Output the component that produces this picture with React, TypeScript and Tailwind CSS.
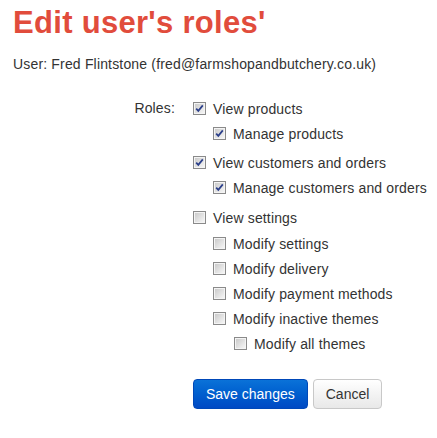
import React from "react";

function Box({ checked }: { checked: boolean }) {
  return (
    <svg width="13" height="13" viewBox="0 0 13 13" className="shrink-0">
      <defs>
        <linearGradient id={checked ? "gc" : "gu"} x1="0" y1="0" x2="1" y2="1">
          <stop offset="0" stopColor="#cbcbcb" />
          <stop offset="1" stopColor="#f5f5f5" />
        </linearGradient>
      </defs>
      <rect x="0.5" y="0.5" width="12" height="12" fill="#f4f4f4" stroke="#8a8a8a" />
      <rect x="2" y="2" width="9" height="9" fill={`url(#${checked ? "gc" : "gu"})`} />
      {checked && (
        <path d="M3.2 6.6 L5.3 8.9 L9.8 3.4" fill="none" stroke="#2b3f8a" strokeWidth="1.7" />
      )}
    </svg>
  );
}

function Row({ label, checked, indent = 0 }: { label: string; checked: boolean; indent?: number }) {
  const pad = indent === 0 ? "pl-[1px]" : indent === 1 ? "pl-[21px]" : "pl-[42px]";
  return (
    <div className={`flex items-center h-[25px] whitespace-nowrap ${pad}`}>
      <Box checked={checked} />
      <span className="ml-[7px] text-[14px] leading-[20px] tracking-[0.15px] text-[#333] whitespace-nowrap">{label}</span>
    </div>
  );
}

export default function App() {
  return (
    <div className="px-[13px] pt-[6px] font-['Liberation_Sans',Arial,sans-serif] text-[#333]">
      <h1 className="text-[31px] leading-[33px] tracking-[0.3px] font-bold text-[#e14c3c] whitespace-nowrap">Edit user's roles'</h1>
      <p className="mt-[15px] text-[14px] leading-[20px] tracking-[0.17px] whitespace-nowrap">
        User: Fred Flintstone (fred@farmshopandbutchery.co.uk)
      </p>
      <div className="mt-[22px] flex">
        <div className="w-[179px] shrink-0 pr-[17px] text-right text-[14px] leading-[25px] tracking-[0.15px]">Roles:</div>
        <div className="flex flex-col shrink-0">
          <div>
            <Row label="View products" checked />
            <Row label="Manage products" checked indent={1} />
          </div>
          <div className="mt-[4px]">
            <Row label="View customers and orders" checked />
            <Row label="Manage customers and orders" checked indent={1} />
          </div>
          <div className="mt-[5px]">
            <Row label="View settings" checked={false} />
            <div className="mt-[1px]">
              <Row label="Modify settings" checked={false} indent={1} />
              <Row label="Modify delivery" checked={false} indent={1} />
              <Row label="Modify payment methods" checked={false} indent={1} />
              <Row label="Modify inactive themes" checked={false} indent={1} />
              <Row label="Modify all themes" checked={false} indent={2} />
            </div>
          </div>
          <div className="mt-[23px] flex gap-[5px] pl-[1px]">
            <button className="h-[30px] px-[12px] rounded-[4px] border border-[#0048b8] bg-gradient-to-b from-[#0b72d8] to-[#0049c4] text-white text-[14px] whitespace-nowrap">
              Save changes
            </button>
            <button className="h-[30px] px-[12px] rounded-[4px] border border-[#c8c8c8] bg-gradient-to-b from-[#ffffff] to-[#e8e8e8] text-[#333] text-[14px] whitespace-nowrap">
              Cancel
            </button>
          </div>
        </div>
      </div>
    </div>
  );
}
